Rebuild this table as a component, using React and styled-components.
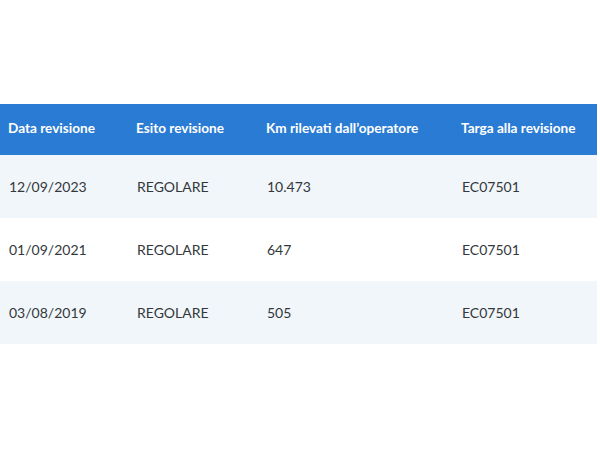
import * as React from "react";
import styled, { createGlobalStyle } from "styled-components";

const GlobalStyle = createGlobalStyle`
  html, body {
    margin: 0;
    padding: 0;
    background: #ffffff;
    font-family: "Lato", "Liberation Sans", sans-serif;
  }
`;

const Page = styled.div`
  width: 600px;
  height: 450px;
  padding-top: 104px;
  box-sizing: border-box;
`;

const Table = styled.table`
  width: 597px;
  border-collapse: collapse;
  table-layout: fixed;
`;

const HeadRow = styled.tr`
  background: #2a7bd4;
  height: 51px;
`;

const HeadCell = styled.th`
  color: #ffffff;
  font-weight: 700;
  font-size: 13.6px;
  text-align: left;
  padding: 0 8px 4px;
  white-space: nowrap;
`;

const Row = styled.tr`
  background: ${(props) => (props.$striped ? "#f1f6fa" : "#ffffff")};
  height: 63px;
`;

const Cell = styled.td`
  color: #33383c;
  font-size: 14px;
  padding: 0 9px 1px;
  white-space: nowrap;
`;

const columns = [
  { label: "Data revisione", width: 128 },
  { label: "Esito revisione", width: 130 },
  { label: "Km rilevati dall’operatore", width: 195 },
  { label: "Targa alla revisione", width: 144 },
];

const rows = [
  ["12/09/2023", "REGOLARE", "10.473", "EC07501"],
  ["01/09/2021", "REGOLARE", "647", "EC07501"],
  ["03/08/2019", "REGOLARE", "505", "EC07501"],
];

export default function App() {
  return (
    <Page>
      <GlobalStyle />
      <Table>
        <colgroup>
          {columns.map((c) => (
            <col key={c.label} style={{ width: c.width }} />
          ))}
        </colgroup>
        <thead>
          <HeadRow>
            {columns.map((c) => (
              <HeadCell key={c.label}>{c.label}</HeadCell>
            ))}
          </HeadRow>
        </thead>
        <tbody>
          {rows.map((r, i) => (
            <Row key={i} $striped={i % 2 === 0}>
              {r.map((v, j) => (
                <Cell key={j}>{v}</Cell>
              ))}
            </Row>
          ))}
        </tbody>
      </Table>
    </Page>
  );
}
